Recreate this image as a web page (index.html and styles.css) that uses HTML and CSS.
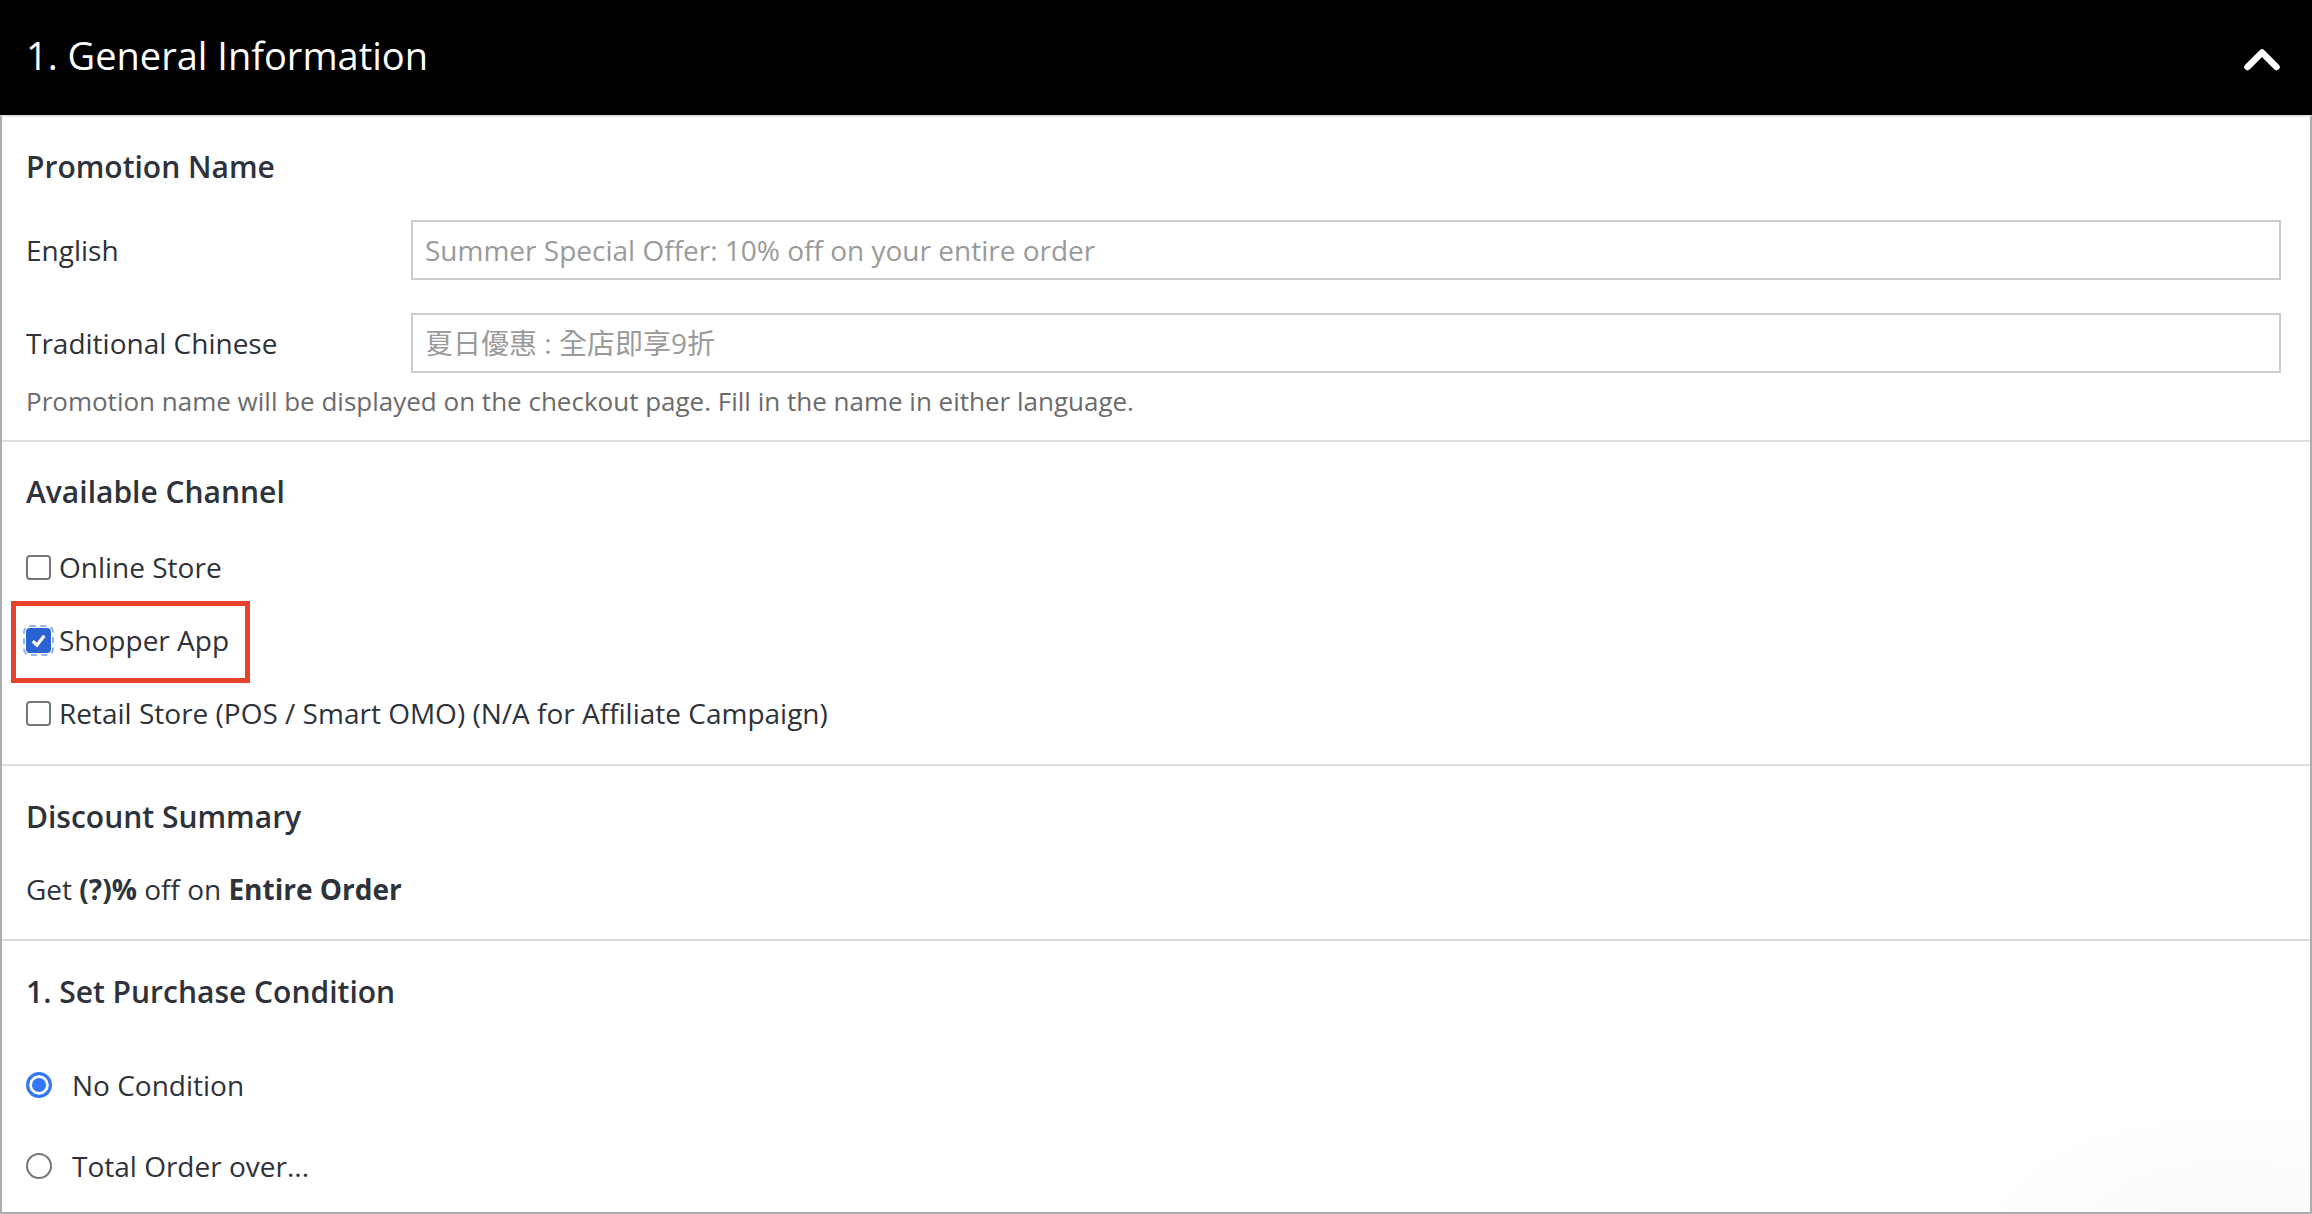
FILE: index.html
```html
<!DOCTYPE html>
<html lang="en">
<head>
    <meta charset="UTF-8">
    <meta name="viewport" content="width=device-width, initial-scale=1.0">
    <title>General Information</title>
    <link rel="stylesheet" href="styles.css">
</head>
<body>
    <div class="panel">
        <div class="panel-header">
            <h1>1. General Information</h1>
            <svg class="chevron" width="36" height="24" viewBox="0 0 36 24">
                <polyline points="3.5,20 18,5.5 32.5,20" fill="none" stroke="#fff" stroke-width="6.5" stroke-linecap="round" stroke-linejoin="round"/>
            </svg>
        </div>

        <div class="panel-body">
            <div class="section">
                <h3>Promotion Name</h3>
                <div class="field-row">
                    <label for="nameEn">English</label>
                    <input type="text" id="nameEn" placeholder="Summer Special Offer: 10% off on your entire order">
                </div>
                <div class="field-row">
                    <label for="nameZh">Traditional Chinese</label>
                    <input type="text" id="nameZh" placeholder="夏日優惠 : 全店即享9折">
                </div>
                <p class="hint">Promotion name will be displayed on the checkout page. Fill in the name in either language.</p>
            </div>

            <div class="section channels">
                <h3>Available Channel</h3>
                <label class="option"><input type="checkbox"> Online Store</label>
                <label class="option highlight"><input type="checkbox" class="focused" checked> Shopper App</label>
                <label class="option"><input type="checkbox"> Retail Store (POS / Smart OMO) (N/A for Affiliate Campaign)</label>
            </div>

            <div class="section summary">
                <h3>Discount Summary</h3>
                <p class="summary-text">Get <b>(?)%</b> off on <b>Entire Order</b></p>
            </div>

            <div class="section conditions">
                <h3>1. Set Purchase Condition</h3>
                <label class="option radio"><input type="radio" name="cond" checked> No Condition</label>
                <label class="option radio"><input type="radio" name="cond"> Total Order over...</label>
            </div>
        </div>
    </div>
</body>
</html>
```

FILE: styles.css
```css
/* 樣式 */
body {
    font-family: "Open Sans", "Noto Sans CJK TC", sans-serif;
    margin: 0;
    background-color: #fff;
    color: #2e323a;
}

.panel {
    width: 2312px;
    height: 1214px;
    box-sizing: border-box;
    display: flex;
    flex-direction: column;
}

.panel-header {
    height: 115px;
    flex-shrink: 0;
    background-color: #000;
    display: flex;
    align-items: center;
    justify-content: space-between;
    padding: 0 32px 0 26px;
}
.panel-header h1 {
    margin: 0 0 5px;
    color: #fff;
    font-size: 38px;
    font-weight: 400;
    line-height: 1;
}
.chevron {
    display: block;
    margin-top: 2px;
}

.panel-body {
    flex: 1;
    border: 2px solid #adadad;
    border-top: 2px solid #e0e0e0;
    background: radial-gradient(ellipse 260px 120px at 2230px 1110px, #f9f9f9, rgba(255,255,255,0));
}

.section {
    padding: 30px 29px 19px 24px;
    border-bottom: 2px solid #dddddd;
}
.section:last-child {
    border-bottom: none;
}

h3 {
    margin: 0 0 33px;
    font-size: 30px;
    font-weight: 600;
    line-height: 40px;
}

.field-row {
    display: flex;
    align-items: center;
    margin-bottom: 33px;
}
.field-row:nth-of-type(2) {
    margin-bottom: 8px;
}
.field-row label {
    width: 385px;
    flex-shrink: 0;
    font-size: 28px;
    line-height: 40px;
}
.field-row input {
    flex: 1;
    height: 60px;
    box-sizing: border-box;
    border: 2px solid #cccccc;
    padding: 0 12px;
    font-family: "Open Sans", "Noto Sans CJK TC", sans-serif;
    font-size: 28px;
    color: #333;
}
.field-row input::placeholder {
    color: #9a9a9a;
}

.hint {
    margin: 0;
    font-size: 26px;
    line-height: 40px;
    color: #6b6b6b;
}

.channels {
    padding-top: 30px;
    padding-bottom: 31px;
}
.channels h3 {
    margin-bottom: 35px;
}

.option {
    display: flex;
    align-items: center;
    font-size: 28px;
    line-height: 40px;
    width: max-content;
}
.option + .option {
    margin-top: 33px;
}

.option input[type="checkbox"] {
    appearance: none;
    margin: 0 8px 0 0;
    width: 25px;
    height: 25px;
    border: 2px solid #767676;
    border-radius: 4px;
    background-color: #fff;
    box-sizing: border-box;
}
.option input[type="checkbox"]:checked {
    border-color: #2b63d4;
    background-color: #2b63d4;
    background-image: url("data:image/svg+xml,%3Csvg xmlns='http://www.w3.org/2000/svg' viewBox='0 0 20 20'%3E%3Cpolyline points='4.5,10.5 8.5,14.5 15.5,5.5' fill='none' stroke='%23fff' stroke-width='3'/%3E%3C/svg%3E");
    background-size: 100% 100%;
}
.option input.focused {
    outline: 2px dashed #8fb4f2;
    outline-offset: 1px;
}

.highlight {
    position: relative;
}
.highlight::after {
    content: "";
    position: absolute;
    left: -15px;
    right: -21px;
    top: -19px;
    bottom: -23px;
    border: 5px solid #e8412c;
}

.summary {
    padding-top: 31px;
    padding-bottom: 30px;
}
.summary h3 {
    margin-bottom: 32px;
}
.summary-text {
    margin: 0;
    font-size: 28px;
    line-height: 40px;
}
.summary-text b {
    font-weight: 700;
}

.conditions {
    padding-top: 31px;
    padding-bottom: 0;
}
.conditions h3 {
    margin-bottom: 53px;
}
.option.radio + .option.radio {
    margin-top: 41px;
}
.option input[type="radio"] {
    appearance: none;
    margin: 0 20px 0 0;
    width: 26px;
    height: 26px;
    border: 2px solid #767676;
    border-radius: 50%;
    background-color: #fff;
    box-sizing: border-box;
}
.option input[type="radio"]:checked {
    border: 3px solid #3478f6;
    background-color: #3478f6;
    box-shadow: inset 0 0 0 3px #fff;
}
```
